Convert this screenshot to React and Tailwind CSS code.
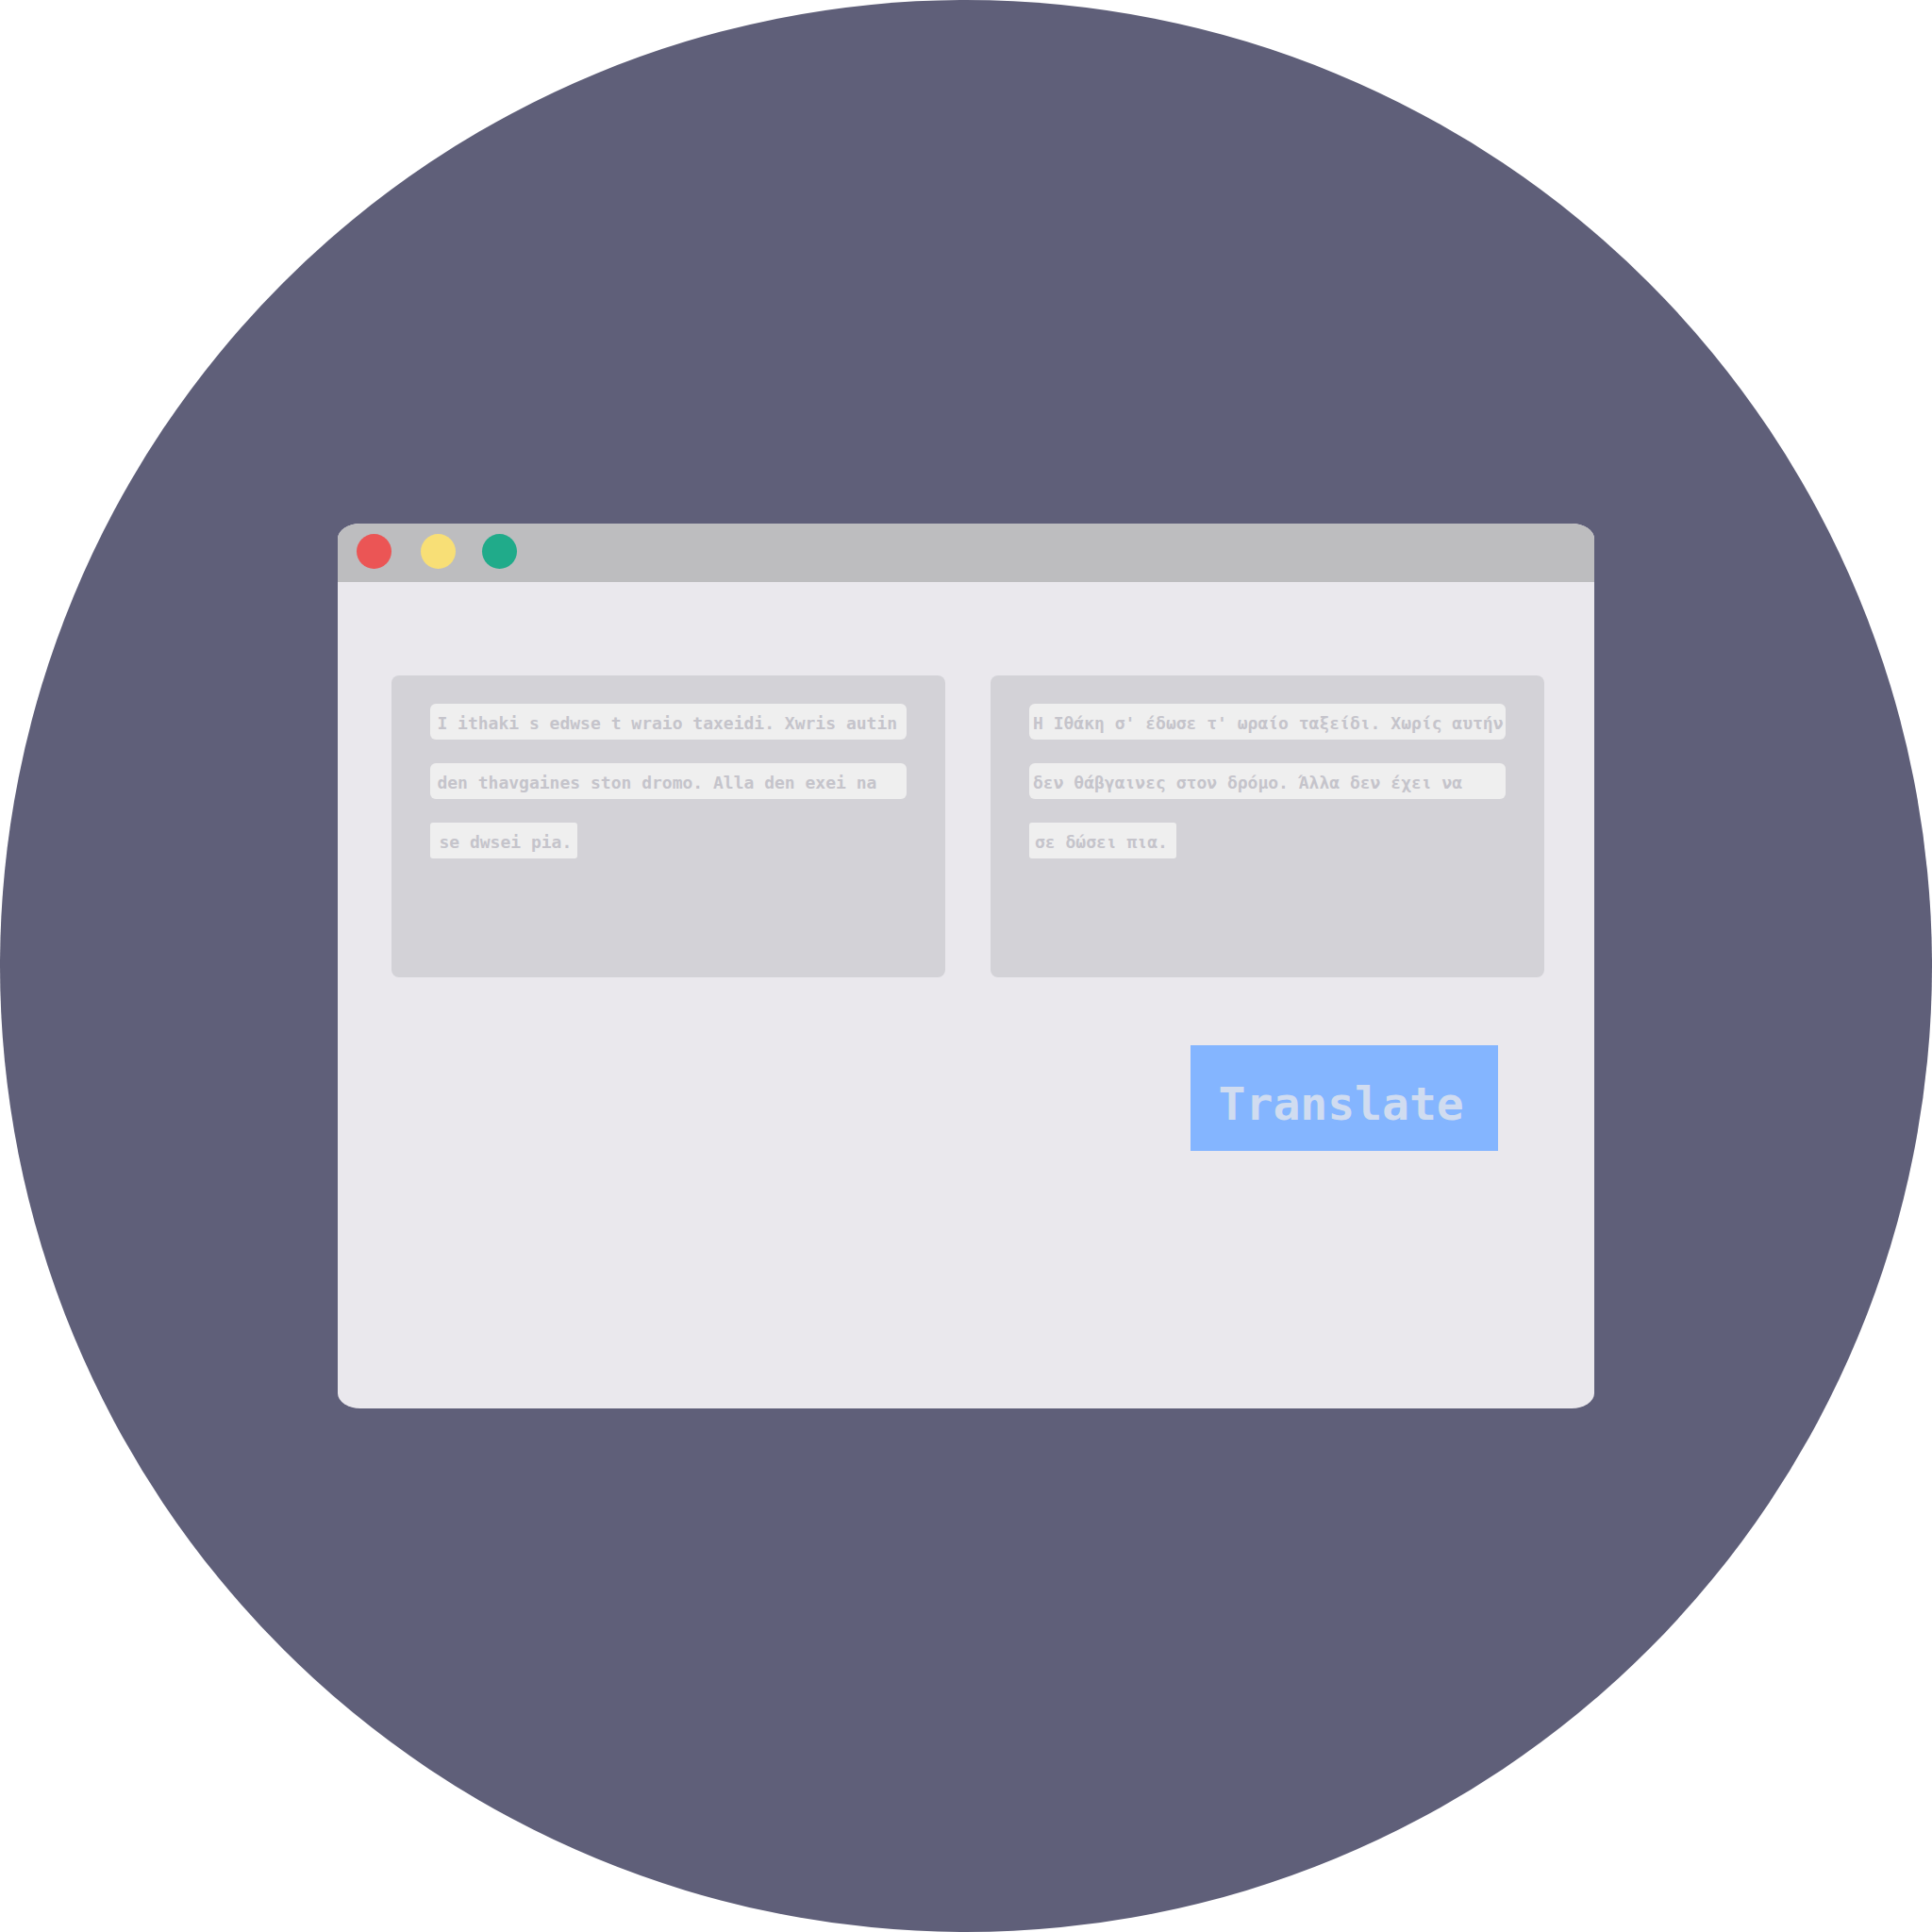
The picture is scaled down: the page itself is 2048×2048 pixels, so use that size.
const lights = [
  { label: 'Close', className: 'bg-[#eb5555]' },
  { label: 'Minimize', className: 'ml-[31px] bg-[#f8df76]' },
  { label: 'Zoom', className: 'ml-7 bg-[#20ab8a]' },
];

const panels = [
  {
    lang: 'el-Latn',
    label: 'Greeklish text',
    inset: 'pl-[7px]',
    lastInset: 'pl-[9px]',
    lines: [
      'I ithaki s edwse t wraio taxeidi. Xwris autin',
      'den thavgaines ston dromo. Alla den exei na',
      'se dwsei pia.',
    ],
  },
  {
    lang: 'el',
    label: 'Greek text',
    inset: 'pl-1',
    lastInset: 'pl-1.5',
    lines: [
      "Η Ιθάκη σ' έδωσε τ' ωραίο ταξείδι. Χωρίς αυτήν",
      'δεν θάβγαινες στον δρόμο. Άλλα δεν έχει να',
      'σε δώσει πια.',
    ],
  },
];

function TitleBar() {
  return (
    <header className="flex h-[62px] items-center bg-[#bdbdbf] pb-1 pl-5">
      {lights.map((light) => (
        <button
          key={light.label}
          type="button"
          aria-label={light.label}
          className={`size-[37px] rounded-full ${light.className}`}
        />
      ))}
    </header>
  );
}

function TextPanel({ panel }) {
  const last = panel.lines.length - 1;
  return (
    <section
      lang={panel.lang}
      aria-label={panel.label}
      className="flex min-h-80 min-w-0 flex-1 flex-col gap-[25px] rounded-lg bg-[#d3d2d7] px-[41px] py-[30px]"
    >
      {panel.lines.map((line, i) => (
        <p
          key={line}
          className={`h-[38px] whitespace-nowrap bg-[#efefef] pt-1 text-[18px] leading-[34px] font-bold text-[#c5c4cb] ${
            i === last ? `w-[156px] rounded-[3px] ${panel.lastInset}` : `rounded-md ${panel.inset}`
          }`}
        >
          {line}
        </p>
      ))}
    </section>
  );
}

export default function App() {
  return (
    <main className="w-full bg-white font-['DejaVu_Sans_Mono',monospace]">
      <div className="flex aspect-square w-full items-center justify-center rounded-full bg-[#5f5f79]">
        <div className="w-[65%] overflow-hidden rounded-[24px/16px] bg-[#eae8ed]">
          <TitleBar />
          <div className="flex flex-col pt-[99px] pr-[53px] pb-[273px] pl-[57px]">
            <div className="flex gap-12">
              {panels.map((panel) => (
                <TextPanel key={panel.lang} panel={panel} />
              ))}
            </div>
            <button
              type="button"
              className="mt-[72px] mr-[49px] h-28 w-[326px] self-end bg-[#84b5ff] pt-3 pl-[30px] text-left text-5xl font-bold text-[#d0dcf0]"
            >
              Translate
            </button>
          </div>
        </div>
      </div>
    </main>
  );
}
